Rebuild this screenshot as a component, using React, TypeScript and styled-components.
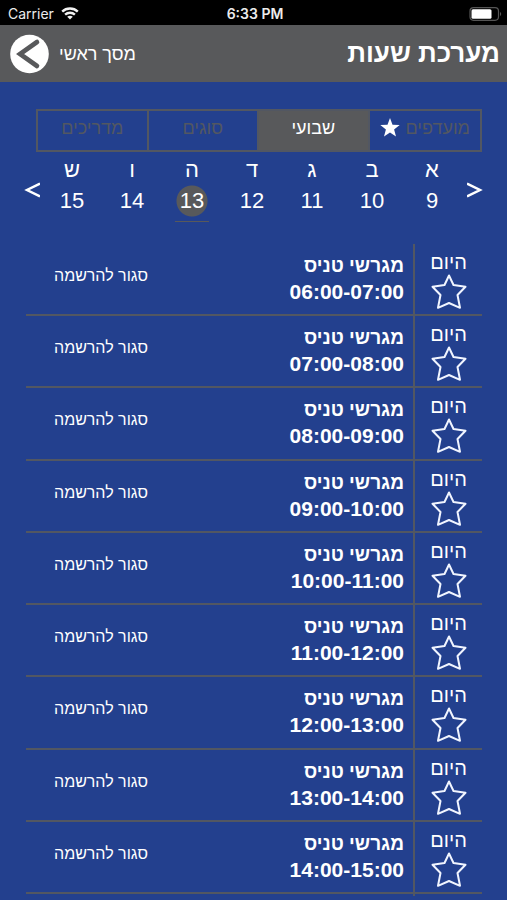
import React, { useState } from 'react';
import styled, { createGlobalStyle } from 'styled-components';

const BLUE = '#23408e';
const GRAY = '#58595b';
const LINE = '#525762';

const GlobalStyle = createGlobalStyle`
  *, *::before, *::after { box-sizing: border-box; }
  body {
    margin: 0;
    background: ${BLUE};
    color: #fff;
    font-family: "Liberation Sans", Arial, sans-serif;
  }
  button { font: inherit; color: inherit; background: none; border: 0; padding: 0; margin: 0; cursor: pointer; }
`;

const Page = styled.div`
  display: flex;
  flex-direction: column;
  height: 100vh;
  overflow: hidden;
  padding-bottom: 4px;
`;

const StatusBar = styled.div`
  display: grid;
  grid-template-columns: 1fr auto 1fr;
  align-items: center;
  flex: none;
  height: 25px;
  padding: 2px 5px 0 8px;
  background: #000;
  color: #ececec;
  font: 14px/20px Inter, sans-serif;
`;

const Carrier = styled.div`
  display: flex;
  align-items: center;
  gap: 7px;
`;

const Clock = styled.div`
  font-weight: 600;
  font-size: 14px;
`;

const BatterySlot = styled.div`
  display: flex;
  justify-content: flex-end;
`;

const Header = styled.header`
  display: flex;
  align-items: center;
  justify-content: space-between;
  flex: none;
  height: 57px;
  padding: 0 7px 0 10px;
  background: ${GRAY};
`;

const Title = styled.h1`
  margin: 0;
  padding-bottom: 2px;
  font-size: 26px;
  line-height: 32px;
  font-weight: 700;
`;

const BackButton = styled.button`
  display: flex;
  align-items: center;
  gap: 10px;
  font-size: 18px;
  line-height: 24px;
`;

const Tabs = styled.div`
  display: grid;
  grid-template-columns: repeat(4, 1fr);
  flex: none;
  height: 43px;
  margin: 27px 25px 0 36px;
  border: 2px solid ${LINE};
`;

const Tab = styled.button<{ $active: boolean }>`
  display: flex;
  align-items: center;
  justify-content: center;
  gap: 6px;
  padding-bottom: 6px;
  font-size: 18px;
  line-height: 24px;
  color: ${(p) => (p.$active ? '#fff' : LINE)};
  background: ${(p) => (p.$active ? GRAY : 'transparent')};

  & + & { border-right: 2px solid ${LINE}; }
`;

const Week = styled.div`
  display: grid;
  grid-template-columns: 26px repeat(7, 1fr) 20px;
  flex: none;
  height: 70px;
  margin: 5px 19px 0 22px;
`;

const Arrow = styled.button`
  display: flex;
  align-items: center;
  justify-content: center;
  padding-bottom: 4px;
`;

const Day = styled.button`
  display: flex;
  flex-direction: column;
  align-items: center;
  font-size: 22px;
  line-height: 26px;
`;

const DayNumber = styled.span<{ $active: boolean }>`
  display: block;
  width: 34px;
  height: 37px;
  margin-top: 2px;
  padding-top: 3px;
  text-align: center;
  border-bottom: 1px solid ${(p) => (p.$active ? GRAY : 'transparent')};
  background: ${(p) => (p.$active ? `radial-gradient(circle at 17px 16px, ${GRAY} 15px, transparent 16px)` : 'none')};
`;

const Schedule = styled.ul`
  display: flex;
  flex-direction: column;
  flex: 1;
  min-height: 0;
  overflow: hidden;
  margin: 17px 25px 0 26px;
  padding: 0;
  list-style: none;
`;

const Row = styled.li`
  display: grid;
  grid-template-columns: 69px 1fr auto;
  flex: 1 0 72px;
  border-bottom: 2px solid ${LINE};
`;

const RowStub = styled.li`
  flex: none;
  height: 2px;
  margin-right: 67px;
  border-right: 2px solid ${LINE};
`;

const DayCell = styled.div`
  display: flex;
  flex-direction: column;
  align-items: center;
  padding-top: 7px;
  border-left: 2px solid ${LINE};
  font-size: 20px;
  line-height: 22px;
`;

const StarButton = styled.button`
  display: block;
  height: 38px;
`;

const Session = styled.div`
  padding: 9px 9px 0 0;
  font-size: 19px;
  line-height: 26px;
  font-weight: 700;
`;

const Time = styled.div`
  direction: ltr;
  text-align: right;
  font-size: 21px;
  line-height: 25px;
`;

const Status = styled.div`
  padding: 20px 0 0 28px;
  font-size: 16px;
  line-height: 24px;
`;

const WifiIcon = () => (
  <svg width="18" height="13" viewBox="0 0 18 13" fill="none" stroke="#f2f2f2" strokeWidth="2.4" aria-hidden="true">
    <path d="M1.2 4.6C5.5.4 12.5.4 16.8 4.6" />
    <path d="M4.1 7.7c2.8-2.6 7-2.6 9.8 0" />
    <path d="M9 12.6 6.2 9.8c1.6-1.4 4-1.4 5.6 0z" fill="#f2f2f2" stroke="none" />
  </svg>
);

const BatteryIcon = () => (
  <svg width="33" height="14" viewBox="0 0 33 14" aria-hidden="true">
    <rect x="1" y="0.7" width="28.5" height="12.6" rx="3.5" fill="none" stroke="#555" strokeWidth="1.2" />
    <rect x="2.5" y="2.2" width="20" height="9.6" rx="1.5" fill="#fff" />
    <path d="M31 5c1.6.6 1.6 3.4 0 4z" fill="#555" />
  </svg>
);

const BackIcon = () => (
  <svg width="39" height="40" viewBox="0 0 39 40" aria-hidden="true">
    <circle cx="19.5" cy="20" r="19.3" fill="#fff" />
    <path d="M27 8 10 20l17 12" fill="none" stroke={GRAY} strokeWidth="4.6" strokeLinecap="round" />
  </svg>
);

const ArrowIcon = ({ d }: { d: string }) => (
  <svg width="16" height="16" viewBox="0 0 16 16" fill="none" stroke="#fff" strokeWidth="2.5" aria-hidden="true">
    <path d={d} />
  </svg>
);

const FilledStar = () => (
  <svg width="20" height="19" viewBox="0 0 20 19" fill="#fff" aria-hidden="true">
    <path d="M10 0l2.5 6.700 7.200.3-5.600 4.500L16 18.600l-6-4.100-6 4.100 1.900-7.100L.3 7l7.200-.3z" />
  </svg>
);

const OutlineStar = () => (
  <svg width="38" height="38" viewBox="0 0 38 38" fill="none" stroke="#f1f5ff" strokeWidth="2" strokeLinejoin="round" aria-hidden="true">
    <path d="M19 2.500 23.500 12 35.500 13.800 27.500 22 30 34.800 19 30 8 34.800 10.500 22 2.500 13.800 14.500 12z" />
  </svg>
);

const TABS = ['מועדפים', 'שבועי', 'סוגים', 'מדריכים'];
const DAYS: [string, number][] = [['א', 9], ['ב', 10], ['ג', 11], ['ד', 12], ['ה', 13], ['ו', 14], ['ש', 15]];
const TIMES = [
  '06:00-07:00', '07:00-08:00', '08:00-09:00', '09:00-10:00', '10:00-11:00',
  '11:00-12:00', '12:00-13:00', '13:00-14:00', '14:00-15:00',
];

export default function App() {
  const [tab, setTab] = useState(1);
  const [date, setDate] = useState(13);

  return (
    <Page>
      <GlobalStyle />
      <StatusBar>
        <Carrier>Carrier <WifiIcon /></Carrier>
        <Clock>6:33 PM</Clock>
        <BatterySlot><BatteryIcon /></BatterySlot>
      </StatusBar>
      <Header>
        <BackButton type="button"><BackIcon /><span>מסך ראשי</span></BackButton>
        <Title dir="rtl">מערכת שעות</Title>
      </Header>
      <Tabs dir="rtl" role="tablist">
        {TABS.map((name, i) => (
          <Tab key={name} type="button" role="tab" aria-selected={tab === i} $active={tab === i} onClick={() => setTab(i)}>
            {name}
            {i === 0 && <FilledStar />}
          </Tab>
        ))}
      </Tabs>
      <Week dir="rtl">
        <Arrow type="button" aria-label="השבוע הקודם"><ArrowIcon d="M0 1.500 13 8 0 14.500" /></Arrow>
        {DAYS.map(([letter, number]) => (
          <Day key={number} type="button" aria-pressed={date === number} onClick={() => setDate(number)}>
            {letter}
            <DayNumber $active={date === number}>{number}</DayNumber>
          </Day>
        ))}
        <Arrow type="button" aria-label="השבוע הבא"><ArrowIcon d="M16 1.500 3 8 16 14.500" /></Arrow>
      </Week>
      <Schedule dir="rtl">
        {TIMES.map((time) => (
          <Row key={time}>
            <DayCell>
              היום
              <StarButton type="button" aria-label="הוספה למועדפים"><OutlineStar /></StarButton>
            </DayCell>
            <Session>
              מגרשי טניס
              <Time>{time}</Time>
            </Session>
            <Status>סגור להרשמה</Status>
          </Row>
        ))}
        <RowStub aria-hidden="true" />
      </Schedule>
    </Page>
  );
}
